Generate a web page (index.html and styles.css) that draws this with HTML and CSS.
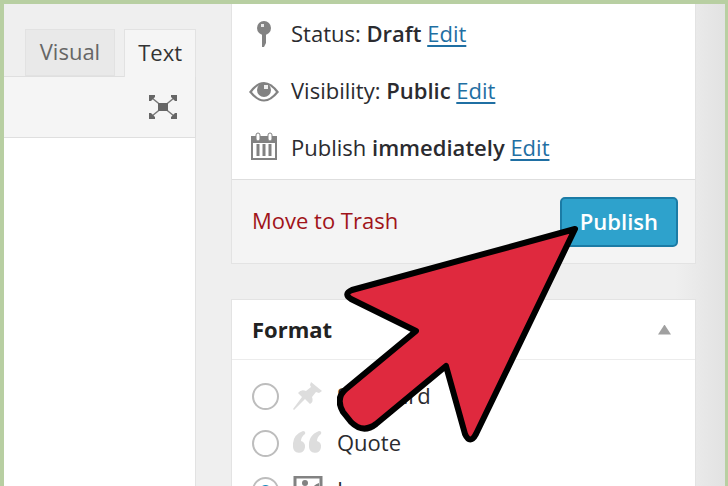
FILE: index.html
```
<!DOCTYPE html>
<html lang="en">

<head>
    <meta charset="UTF-8">
    <meta name="viewport" content="width=device-width, initial-scale=1.0">
    <title>Publish post</title>
    <link rel="stylesheet" href="styles.css">
</head>

<body>
    <main>
        <section class="editor">
            <div class="tabs">
                <button class="tab" type="button">Visual</button>
                <button class="tab is-active" type="button">Text</button>
            </div>
            <div class="toolbar">
                <button class="fullscreen" type="button" aria-label="Fullscreen">
                    <svg width="28" height="24" viewBox="0 0 28 24">
                        <path d="M3 3l22 18M25 3L3 21" stroke="#777" stroke-width="1.5" />
                        <path d="M0 0h6v2L2 6H0zM28 0v6h-2l-4-4V0zM0 24v-6h2l4 4v2zM28 24h-6v-2l4-4h2z" fill="#666" />
                        <path d="M9 8h10v8H9z" fill="#666" />
                    </svg>
                </button>
            </div>
            <textarea class="content" aria-label="Post content"></textarea>
        </section>

        <aside>
            <section class="box">
                <ul class="misc">
                    <li>
                        <svg width="30" height="30" viewBox="0 0 30 30">
                            <circle cx="15" cy="10" r="7" fill="#828282" />
                            <path d="M13 16h4v9l-2 4h-2z" fill="#828282" />
                            <path d="M12 6h3v3h-3z" fill="#e8e8e8" />
                        </svg>
                        <span>Status: <b>Draft</b> <a href="#">Edit</a></span>
                    </li>
                    <li>
                        <svg width="30" height="30" viewBox="0 0 30 30">
                            <path d="M0 17Q15-3 30 17Q15 36 0 17z" fill="#828282" />
                            <path d="M3 17Q15 1 27 17Q15 32 3 17z" fill="#fff" />
                            <circle cx="15" cy="15" r="7" fill="#828282" />
                            <path d="M15 10h4v4h-4z" fill="#eee" />
                        </svg>
                        <span>Visibility: <b>Public</b> <a href="#">Edit</a></span>
                    </li>
                    <li>
                        <svg width="30" height="30" viewBox="0 0 30 30">
                            <path d="M2 4h26v24H2z" fill="#828282" />
                            <path d="M4 11h22v15H4z" fill="#fff" />
                            <path d="M9 12v12M15 12v12M21 12v12" stroke="#828282" stroke-width="3" />
                            <rect x="7" y="1" width="4" height="8" rx="2" fill="#fff" stroke="#828282" />
                            <rect x="19" y="1" width="4" height="8" rx="2" fill="#fff" stroke="#828282" />
                        </svg>
                        <span>Publish <b>immediately</b> <a href="#">Edit</a></span>
                    </li>
                </ul>
                <footer>
                    <a class="trash" href="#">Move to Trash</a>
                    <button class="publish" type="button">Publish</button>
                </footer>
            </section>

            <section class="box">
                <header>
                    <h2>Format</h2>
                    <button class="toggle" type="button" aria-label="Toggle panel"></button>
                </header>
                <div class="formats">
                    <label>
                        <input type="radio" name="format">
                        <svg width="30" height="30" viewBox="0 0 30 30">
                            <path d="M18 0l11 9-3 2-3-1-4 5q2 5-2 7l-5-5L1 28l-1-1L9 15l-4-4q3-4 8-2l5-4-1-2z" fill="#ddd" />
                        </svg>
                        <span>Standard</span>
                    </label>
                    <label>
                        <input type="radio" name="format">
                        <svg width="30" height="30" viewBox="0 0 30 30">
                            <path id="mark" d="M10 2Q13 2 12 5Q8 8 8 12a6 6 0 1 1-8 6Q-1 6 10 2z" fill="#ddd" />
                            <use href="#mark" x="16" />
                        </svg>
                        <span>Quote</span>
                    </label>
                    <label>
                        <input type="radio" name="format" checked>
                        <svg width="30" height="30" viewBox="0 0 30 30">
                            <path d="M2 1h26v26H2z" fill="#fff" stroke="#828282" stroke-width="3" />
                            <circle cx="12" cy="7" r="3" fill="#828282" />
                            <path d="M5 24V13l6 5 7-1q0-7 8-10v17z" fill="#828282" />
                        </svg>
                        <span>Image</span>
                    </label>
                </div>
            </section>
        </aside>

        <svg class="pointer" width="242" height="222" viewBox="337 224 242 222" aria-hidden="true">
            <path d="M575 229L352 290Q343 294 351 299L416 331L346 389Q335 398 343 412L351 422Q363 434 376 424L446 366L465 434Q470 445 476 434z" />
        </svg>
    </main>
</body>

</html>
```
FILE: styles.css
```
*,
*::before,
*::after {
    box-sizing: border-box;
    margin: 0;
    padding: 0;
}

body {
    font-family: 'Open Sans', 'Noto Sans', sans-serif;
    font-size: 22px;
    line-height: 30px;
    color: #2b2b2f;
    overflow: hidden;
}

button {
    font: inherit;
    border: 0;
    background: none;
    cursor: pointer;
}

svg {
    flex: none;
}

main {
    position: relative;
    display: flex;
    gap: 35px;
    height: 100vh;
    padding-right: 29px;
    border: solid #b8cfa2;
    border-width: 4px 3px 0 4px;
    background: linear-gradient(to left, #e2e2e2, #efefef 50px);
}

.editor {
    flex: none;
    width: 192px;
    display: flex;
    flex-direction: column;
    padding-top: 25px;
}

.tabs {
    display: flex;
    justify-content: flex-end;
    gap: 9px;
    position: relative;
    z-index: 1;
}

.tab {
    height: 47px;
    padding: 0 14px 3px;
    border: 1px solid #e2e2e2;
    background: #e9e9e9;
    color: #666;

    &.is-active {
        height: 48px;
        margin-bottom: -1px;
        padding: 0 13px 4px;
        border-bottom: 0;
        background: #f5f5f5;
        color: #333;
    }
}

.toolbar {
    display: flex;
    justify-content: flex-end;
    align-items: center;
    height: 62px;
    padding-right: 18px;
    border: solid #dfdfdf;
    border-width: 1px 1px 1px 0;
    background: #f5f5f5;
}

.fullscreen {
    display: flex;
}

.content {
    flex: 1;
    width: 100%;
    border: 0;
    border-right: 1px solid #e2e2e2;
    background: #fff;
    resize: none;
}

aside {
    flex: 1;
    display: flex;
    flex-direction: column;
    gap: 35px;
    min-height: 0;
    overflow: hidden;
}

.box {
    flex: none;
    border: 1px solid #e3e3e3;
    background: #fff;

    &:first-child {
        border-top: 0;
    }

    & footer {
        display: flex;
        align-items: center;
        justify-content: space-between;
        padding: 17px 17px 16px 20px;
        border-top: 1px solid #dedede;
        background: #f4f4f4;
    }

    & header {
        display: flex;
        align-items: center;
        justify-content: space-between;
        height: 60px;
        padding: 0 24px 0 20px;
        border-bottom: 1px solid #ececec;
    }

    & h2 {
        padding-bottom: 2px;
        font-size: 22px;
        font-weight: 700;
        color: #222;
    }
}

.misc {
    list-style: none;
    padding: 0 17px 4px;

    & li {
        display: flex;
        align-items: center;
        gap: 12px;
        height: 57px;
    }

    & b {
        font-weight: 600;
    }

    & a {
        color: #1f6fa3;
        text-decoration-thickness: 2px;
        text-underline-offset: 3px;
    }
}

.trash {
    padding-bottom: 4px;
    color: #a01319;
    text-decoration: none;
}

.publish {
    height: 50px;
    padding: 0 18px 2px;
    border: 2px solid #1b7ba5;
    border-radius: 5px;
    background: #2ea2cc;
    color: #fff;
    font-weight: 600;
}

.toggle {
    width: 13px;
    height: 10px;
    background: #a0a0a0;
    clip-path: polygon(50% 0, 100% 100%, 0 100%);
}

.formats {
    padding: 13px 20px;

    & label {
        display: flex;
        align-items: center;
        height: 47px;
        gap: 14px;
    }

    & span {
        padding-bottom: 4px;
    }

    & input {
        appearance: none;
        flex: none;
        width: 27px;
        height: 27px;
        border: 2px solid #bdbdbd;
        border-radius: 50%;
        background: #fff;

        &:checked {
            background: radial-gradient(circle, #1e8cbe 5px, #fff 6px);
        }
    }
}

.pointer {
    position: absolute;
    top: 220px;
    left: 333px;
    pointer-events: none;

    & path {
        fill: #df293e;
        stroke: #000;
        stroke-width: 6;
        stroke-linejoin: round;
    }
}
```
